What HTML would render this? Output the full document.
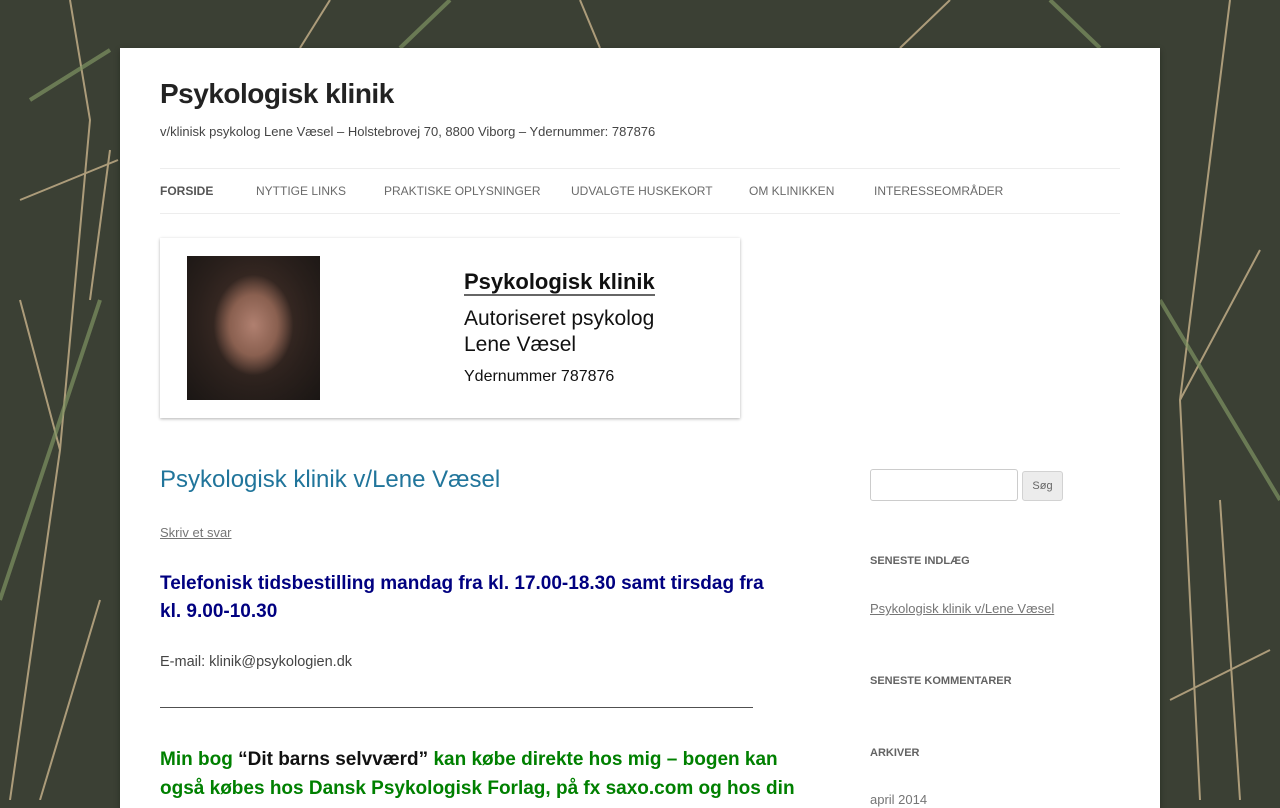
<!DOCTYPE html>
<html><head><meta charset="utf-8"><style>
body{margin:0;width:1280px;height:800px;overflow:hidden;background:#3b4034;font-family:"Liberation Sans",sans-serif;position:relative}
.bg{position:absolute;left:0;top:0}
.page{position:absolute;left:120px;top:48px;width:1040px;height:760px;background:#fff;box-shadow:0 2px 6px rgba(0,0,0,.3)}
h1{margin:0;position:absolute;top:30px;left:40px;font-size:28px;font-weight:bold;color:#222;letter-spacing:-0.5px}
.desc{position:absolute;top:76px;left:40px;font-size:13px;color:#444}
.nav{position:absolute;top:120px;left:40px;width:960px;height:44px;border-top:1px solid #ededed;border-bottom:1px solid #ededed}
.nav span{position:absolute;top:15px;font-size:12px;color:#6a6a6a;text-transform:uppercase}
.hdr{position:absolute;left:40px;top:190px;width:580px;height:180px;background:#fff;box-shadow:0 1px 3px rgba(0,0,0,.3)}
.photo{position:absolute;left:27px;top:18px;width:133px;height:144px;background:radial-gradient(ellipse 30% 35% at 50% 48%,#b08070 0,#8a6050 60%,transparent 100%),radial-gradient(ellipse at 50% 45%,#4a342c 0,#2a201c 60%,#1a1614 100%)}
.ht{position:absolute;left:304px;color:#111;font-family:"Liberation Sans",sans-serif}
.entry{position:absolute;left:40px;top:418px;width:620px}
.et{font-size:24px;color:#21759b;margin:0}
a{color:#757575}
.s{position:absolute;font-size:13px;color:#757575}
.w{position:absolute;left:750px;font-size:11px;font-weight:bold;color:#636363;text-transform:uppercase}
</style></head><body>
<svg class="bg" width="1280" height="800" stroke-width="2" fill="none">
<g stroke="#c9b38c" opacity=".8">
<path d="M10 800 L60 450 L90 120 L70 0"/><path d="M60 450 L20 300"/><path d="M90 300 L110 150"/>
<path d="M40 800 L100 600"/><path d="M1200 800 L1180 400 L1230 0"/><path d="M1180 400 L1260 250"/>
<path d="M1240 800 L1220 500"/><path d="M1170 700 L1270 650"/><path d="M20 200 L118 160"/>
<path d="M300 48 L330 0"/><path d="M600 48 L580 0"/><path d="M900 48 L950 0"/>
</g>
<g stroke="#7f9362" stroke-width="4" opacity=".7">
<path d="M0 600 L100 300"/><path d="M1160 300 L1280 500"/><path d="M400 48 L450 0"/><path d="M1100 48 L1050 0"/><path d="M30 100 L110 50"/>
</g></svg>
<div class="page">
<h1>Psykologisk klinik</h1>
<div class="desc">v/klinisk psykolog Lene Væsel – Holstebrovej 70, 8800 Viborg – Ydernummer: 787876</div>
<div class="nav">
<span style="left:0;font-weight:bold;color:#555">Forside</span>
<span style="left:96px">Nyttige links</span>
<span style="left:224px">Praktiske oplysninger</span>
<span style="left:411px">Udvalgte huskekort</span>
<span style="left:589px">Om klinikken</span>
<span style="left:714px">Interesseområder</span>
</div>
<div class="hdr"><div class="photo"></div>
<div class="ht" style="top:32px;font-size:22px;font-weight:bold;border-bottom:2px solid #666;line-height:24px">Psykologisk klinik</div>
<div class="ht" style="top:68px;font-size:21px;line-height:26px">Autoriseret psykolog<br>Lene Væsel</div>
<div class="ht" style="top:130px;font-size:16px">Ydernummer 787876</div>
</div>
<div class="entry">
<div class="et">Psykologisk klinik v/Lene Væsel</div>
<div style="margin-top:31px;font-size:13px"><a href="#">Skriv et svar</a></div>
<div style="margin-top:30px;font-size:19px;font-weight:bold;color:#000080;line-height:28px">Telefonisk tidsbestilling mandag fra kl. 17.00-18.30 samt tirsdag fra kl. 9.00-10.30</div>
<div style="margin-top:28px;font-size:14.5px;color:#444">E-mail: klinik@psykologien.dk</div>
<div style="margin-top:28px;font-size:14px;color:#444;white-space:nowrap;overflow:hidden;width:593px">———————————————————————————————————————————————————————————-</div>
<div style="margin-top:31px;width:642px;font-size:19px;font-weight:bold;color:#008000;line-height:29px">Min bog <span style="color:#111">“Dit barns selvværd”</span> kan købe direkte hos mig – bogen kan også købes hos Dansk Psykologisk Forlag, på fx saxo.com og hos din</div>
</div>
<div style="position:absolute;left:750px;top:421px;width:146px;height:30px;border:1px solid #ccc;border-radius:3px"></div>
<div style="position:absolute;left:902px;top:423px;width:39px;height:28px;border:1px solid #d2d2d2;border-radius:3px;background:#ececec;font-size:11px;color:#666;text-align:center;line-height:28px">Søg</div>
<div class="w" style="top:507px">Seneste indlæg</div>
<div class="s" style="left:750px;top:553px"><a href="#">Psykologisk klinik v/Lene Væsel</a></div>
<div class="w" style="top:627px">Seneste kommentarer</div>
<div class="w" style="top:699px">Arkiver</div>
<div class="s" style="left:750px;top:744px">april 2014</div>
</div>
</body></html>
